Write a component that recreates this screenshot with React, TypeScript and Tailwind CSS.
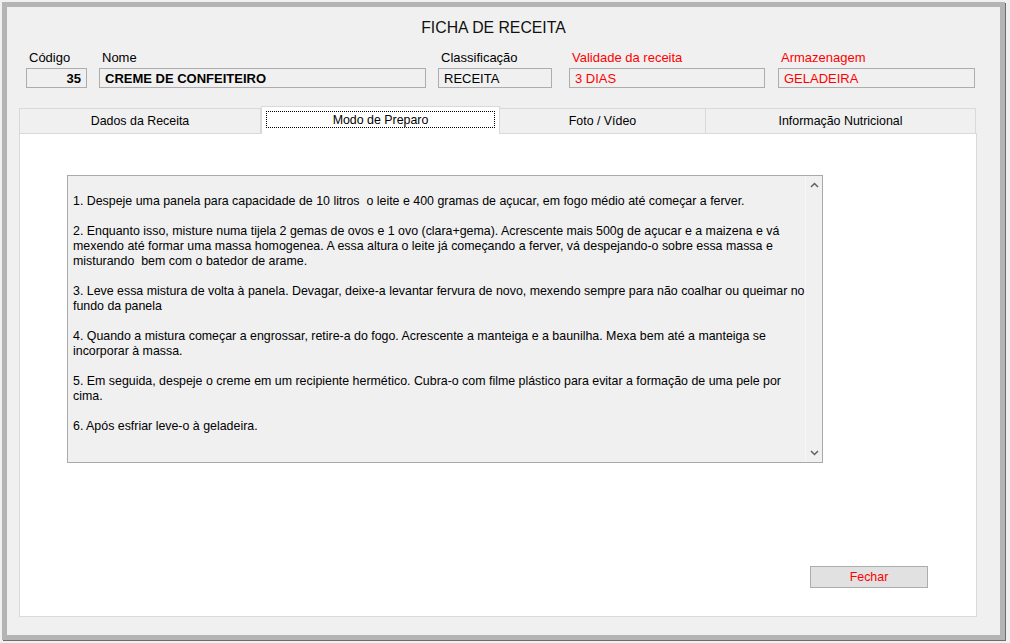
import React from "react";

const fields = [
  { label: "Código", value: "35", w: "w-[61px]", bold: true, right: true, red: false },
  { label: "Nome", value: "CREME DE CONFEITEIRO", w: "w-[327px]", bold: true, right: false, red: false },
  { label: "Classificação", value: "RECEITA", w: "w-[114px]", bold: false, right: false, red: false },
  { label: "Validade da receita", value: "3 DIAS", w: "w-[196px]", bold: false, right: false, red: true },
  { label: "Armazenagem", value: "GELADEIRA", w: "w-[197px]", bold: false, right: false, red: true },
];

const gaps = ["", "ml-[12px]", "ml-[12px]", "ml-[17px]", "ml-[13px]"];

const tabs = [
  { label: "Dados da Receita", w: "w-[242px]" },
  { label: "Modo de Preparo", w: "w-[239px]", active: true },
  { label: "Foto / Vídeo", w: "w-[207px]" },
  { label: "Informação Nutricional", w: "w-[271px]" },
];

const lines = [
  "1. Despeje uma panela para capacidade de 10 litros  o leite e 400 gramas de açucar, em fogo médio até começar a ferver.",
  "",
  "2. Enquanto isso, misture numa tijela 2 gemas de ovos e 1 ovo (clara+gema). Acrescente mais 500g de açucar e a maizena e vá",
  "mexendo até formar uma massa homogenea. A essa altura o leite já começando a ferver, vá despejando-o sobre essa massa e",
  "misturando  bem com o batedor de arame.",
  "",
  "3. Leve essa mistura de volta à panela. Devagar, deixe-a levantar fervura de novo, mexendo sempre para não coalhar ou queimar no",
  "fundo da panela",
  "",
  "4. Quando a mistura começar a engrossar, retire-a do fogo. Acrescente a manteiga e a baunilha. Mexa bem até a manteiga se",
  "incorporar à massa.",
  "",
  "5. Em seguida, despeje o creme em um recipiente hermético. Cubra-o com filme plástico para evitar a formação de uma pele por",
  "cima.",
  "",
  "6. Após esfriar leve-o à geladeira.",
];

export default function App() {
  return (
    <div className="w-[1010px] h-[643px] bg-[#f0f0f0] pt-[2px] pl-[2px] font-['Liberation_Sans',Arial,sans-serif] text-black overflow-hidden">
      <div className="w-[1003px] h-[638px] border-[5px] border-[#b4b4b4] shadow-[1px_1px_0_#6d6d6d] bg-[#f0f0f0] flex flex-col">
        {/* Title */}
        <div className="pt-[12px] h-[30px] pr-[20px] text-center text-[15.8px] leading-[18px] text-[#111]">
          FICHA DE RECEITA
        </div>

        {/* Fields */}
        <div className="flex pl-[19px] mt-[13px]">
          {fields.map((f, i) => (
            <div key={f.label} className={`flex flex-col ${f.w} ${gaps[i]}`}>
              <span
                className={`pl-[3px] text-[13px] leading-[15px] ${f.red ? "text-[#ff0000]" : "text-black"}`}
              >
                {f.label}
              </span>
              <div
                className={`mt-[3px] h-[20px] border border-[#adadad] bg-[#f0f0f0] px-[5px] pt-[1px] flex items-center text-[13px] ${
                  f.right ? "justify-end" : ""
                } ${f.bold ? "font-bold text-[12.7px]" : ""} ${f.red ? "text-[#ff0000]" : "text-black"}`}
              >
                {f.value}
              </div>
            </div>
          ))}
        </div>

        {/* Tabs */}
        <div className="ml-[12px] mt-[18px] flex items-end h-[27px]">
          {tabs.map((t) =>
            t.active ? (
              <div
                key={t.label}
                className={`${t.w} h-[28px] -mb-px relative z-10 bg-white border border-b-0 border-[#d9d9d9] pt-[4px] px-[4px]`}
              >
                <div className="h-[17px] pt-[1px] border border-dotted border-black flex items-center justify-center text-[12.4px]">
                  {t.label}
                </div>
              </div>
            ) : (
              <div
                key={t.label}
                className={`${t.w} h-[26px] -mb-px pt-[1px] border border-[#d9d9d9] -ml-px first:ml-0 bg-[#f0f0f0] flex items-center justify-center text-[12.4px]`}
              >
                {t.label}
              </div>
            )
          )}
        </div>

        {/* Panel */}
        <div className="ml-[12px] w-[958px] h-[484px] bg-white border border-[#d9d9d9] flex flex-col">
          <div className="ml-[47px] mt-[41px] w-[756px] h-[288px] border border-[#a9a9a9] bg-[#f0f0f0] flex">
            <div className="flex-1 pl-[5px] pt-[18px] text-[12.4px] leading-[15px] overflow-hidden">
              {lines.map((l, i) =>
                l === "" ? (
                  <div key={i} className="h-[15px]" />
                ) : (
                  <div key={i} className="whitespace-pre">
                    {l}
                  </div>
                )
              )}
            </div>
            <div className="w-[17px] border-l border-[#f7f7f7] flex flex-col justify-between items-center py-[6px]">
              <svg width="9" height="6" viewBox="0 0 9 6">
                <path d="M1 5 L4.5 1.5 L8 5" fill="none" stroke="#606060" strokeWidth="1.5" />
              </svg>
              <svg width="9" height="6" viewBox="0 0 9 6">
                <path d="M1 1 L4.5 4.5 L8 1" fill="none" stroke="#606060" strokeWidth="1.5" />
              </svg>
            </div>
          </div>
          <div className="flex-1" />
          <div className="flex justify-end mr-[48px] mb-[28px]">
            <button className="w-[118px] h-[22px] bg-[#e1e1e1] border border-[#adadad] text-[12.4px] text-[#ff0000]">
              Fechar
            </button>
          </div>
        </div>
      </div>
    </div>
  );
}
